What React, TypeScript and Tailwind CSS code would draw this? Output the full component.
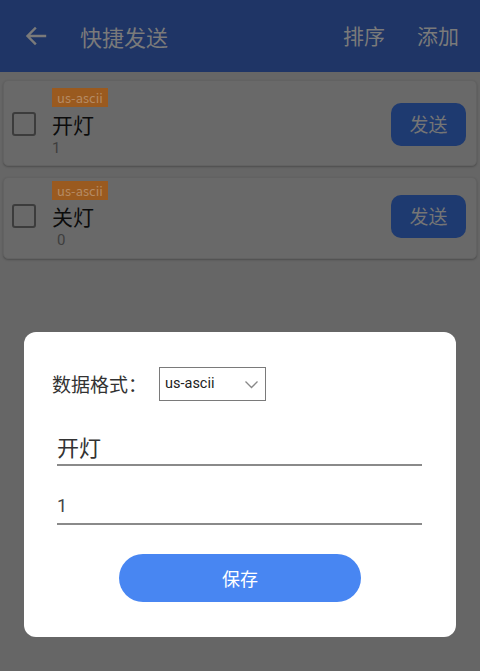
import React from "react";

function Card({ title, value, pt, pb, mt, valuePad }: { title: string; value: string; pt: string; pb: string; mt: string; valuePad: string }) {
  return (
    <div className={`mx-[3px] rounded-[5px] bg-[#696969] shadow-[0_1px_2px_rgba(0,0,0,0.25)] border border-[#626262] pl-[8px] pr-[10px] ${pt} ${pb}`}>
      <div className="ml-[40px] w-fit bg-[#9a5a1f] text-[#b58a63] text-[13px] leading-[19px] px-[5px]">us-ascii</div>
      <div className={`flex items-center h-[30px] ${mt}`}>
        <div className="w-[24px] h-[24px] border-2 border-[#3c3c3c] rounded-[3px] shrink-0" />
        <div className="flex-1 ml-[16px] text-[21px] leading-[30px] text-[#0c0c0c]">{title}</div>
        <div className="w-[75px] h-[43px] rounded-[10px] bg-[#1e3a70] text-[#757575] text-[19px] flex items-center justify-center shrink-0">
          发送
        </div>
      </div>
      <div
        className={`ml-[40px] text-[15px] leading-[18px] text-[#3e3e3e] ${valuePad}`}
        style={{ fontFamily: 'Roboto, "Noto Sans", sans-serif' }}
      >
        {value}
      </div>
    </div>
  );
}

export default function App() {
  return (
    <div
      className="relative w-[480px] h-[671px] bg-[#666666] overflow-hidden"
      style={{ fontFamily: '"Noto Sans CJK SC", "Noto Sans", Roboto, sans-serif' }}
    >
      <div className="h-[72px] bg-[#1f3566] flex items-center px-[24px] text-[#7a7a7a]">
        <svg width="24" height="24" viewBox="0 0 24 24" fill="none" stroke="#7a7a7a" strokeWidth="2.4" strokeLinecap="square">
          <path d="M21 12H4M11 4.5L3.5 12L11 19.5" />
        </svg>
        <div className="ml-[32px] text-[22px] flex-1">快捷发送</div>
        <div className="text-[21px] mr-[-2px]">排序</div>
        <div className="text-[21px] ml-[34px] mr-[-3px]">添加</div>
      </div>
      <div className="flex flex-col gap-[11px] pt-[8px]">
        <Card title="开灯" value="1" pt="pt-[7px]" pb="pb-[8px]" mt="mt-[2px]" valuePad="" />
        <Card title="关灯" value="0" pt="pt-[3px]" pb="pb-[9px]" mt="mt-[1px]" valuePad="pl-[5px]" />
      </div>

      <div className="absolute left-[24px] top-[332px] w-[432px] h-[305px] bg-white rounded-[12px] px-[28px] pt-[35px]">
        <div className="flex items-center">
          <span className="text-[19px] text-[#333333]">数据格式：</span>
          <div className="ml-[12px] w-[107px] h-[34px] border border-[#7a7a7a] flex items-center justify-between pl-[5px] pr-[6px]">
            <span className="text-[14.5px] text-[#222222]" style={{ fontFamily: 'Roboto, "Noto Sans", sans-serif' }}>us-ascii</span>
            <svg width="15" height="10" viewBox="0 0 15 10" fill="none" stroke="#888888" strokeWidth="1.3">
              <path d="M1.5 2.5L7.5 8.5L13.5 2.5" />
            </svg>
          </div>
        </div>
        <div className="mt-[28px] ml-[5px] mr-[6px] border-b-2 border-[#8a8a8a] pb-[1px]">
          <div className="text-[22px] leading-[34px] text-[#333333]">开灯</div>
        </div>
        <div className="mt-[22px] ml-[5px] mr-[6px] border-b-2 border-[#8a8a8a]">
          <div className="text-[18px] leading-[35px] text-[#444444]" style={{ fontFamily: 'Roboto, "Noto Sans", sans-serif' }}>1</div>
        </div>
        <div className="flex justify-center mt-[29px]">
          <div className="w-[242px] h-[48px] rounded-full bg-[#4886f2] text-white text-[18px] flex items-center justify-center">
            保存
          </div>
        </div>
      </div>
    </div>
  );
}
